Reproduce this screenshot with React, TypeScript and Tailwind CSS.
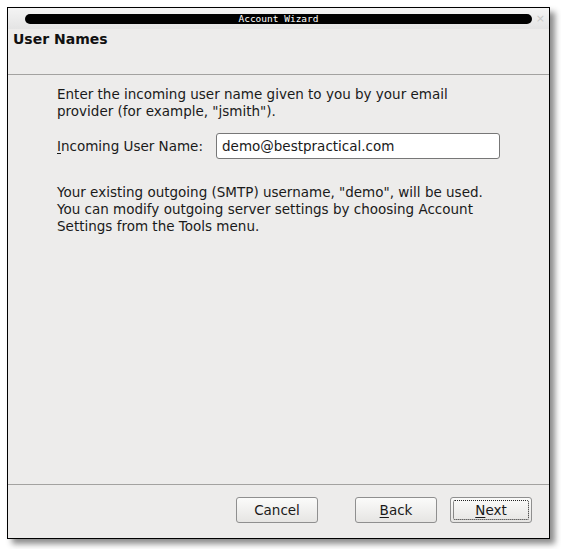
import React from 'react';

const font = { fontFamily: '"DejaVu Sans", "Liberation Sans", sans-serif' };

const WizardButton = ({ label, mnemonic, focused }: { label: string; mnemonic?: number; focused?: boolean }) => {
  const text =
    mnemonic === undefined ? (
      label
    ) : (
      <>
        {label.slice(0, mnemonic)}
        <span className="underline underline-offset-2">{label[mnemonic]}</span>
        {label.slice(mnemonic + 1)}
      </>
    );
  return (
    <button className="w-[82px] h-[26px] rounded-[3px] border border-[#8f8f8f] bg-gradient-to-b from-[#fbfbfa] to-[#e6e5e3] p-[2px] text-[13.5px] text-[#1a1a1a]">
      <div
        className={
          'h-full w-full flex items-center justify-center rounded-[2px] ' +
          (focused ? 'border border-dotted border-[#222]' : 'border border-transparent')
        }
      >
        {text}
      </div>
    </button>
  );
};

export default function App() {
  return (
    <div className="w-[561px] h-[549px] bg-white pt-[7px] pl-[7px]" style={font}>
      <div className="relative w-[543px] h-[532px] border border-black flex flex-col shadow-[5px_5px_6px_rgba(0,0,0,0.45)]">
        {/* title bar */}
        <div className="h-[21px] shrink-0 bg-gradient-to-b from-[#f4f4f4] to-[#e4e4e4] flex items-center pl-[17px] pr-[17px]">
          <div className="flex-1 h-[10px] rounded-full bg-black flex items-center justify-center">
            <span className="text-white text-[9.5px] leading-none" style={{ fontFamily: '"DejaVu Sans Mono", monospace' }}>
              Account Wizard
            </span>
          </div>
        </div>
        <span className="absolute right-[4px] top-[5px] text-[11px] leading-none text-[#c8c8c8]">×</span>

        <div className="flex-1 bg-[#edeceb] flex flex-col">
          <div className="h-[45px] shrink-0 pl-[5px] pt-[2px]">
            <h1 className="text-[14px] font-bold leading-[17px] text-[#111]">User Names</h1>
          </div>
          <div className="h-px bg-[#a3a2a0] shrink-0" />
          <div className="flex-1 pl-[49px] pr-[30px] pt-[11px] text-[13.5px] leading-[17px] text-[#1a1a1a]">
            <p>
              Enter the incoming user name given to you by your email
              <br />
              provider (for example, "jsmith").
            </p>
            <div className="flex items-center mt-[13px]">
              <span className="w-[159px]">
                <span className="underline underline-offset-2">I</span>ncoming User Name:
              </span>
              <div className="w-[284px] h-[26px] rounded-[3px] border border-[#777] bg-white flex items-center pl-[5px]">
                demo@bestpractical.com
              </div>
            </div>
            <p className="mt-[25px]">
              Your existing outgoing (SMTP) username, "demo", will be used.
              <br />
              You can modify outgoing server settings by choosing Account
              <br />
              Settings from the Tools menu.
            </p>
          </div>
          <div className="h-px bg-[#a3a2a0] shrink-0" />
          <div className="h-[53px] shrink-0 flex items-start pt-[12px] pl-[228px]">
            <WizardButton label="Cancel" />
            <div className="w-[37px]" />
            <WizardButton label="Back" mnemonic={0} />
            <div className="w-[13px]" />
            <WizardButton label="Next" mnemonic={0} focused />
          </div>
        </div>
      </div>
    </div>
  );
}
